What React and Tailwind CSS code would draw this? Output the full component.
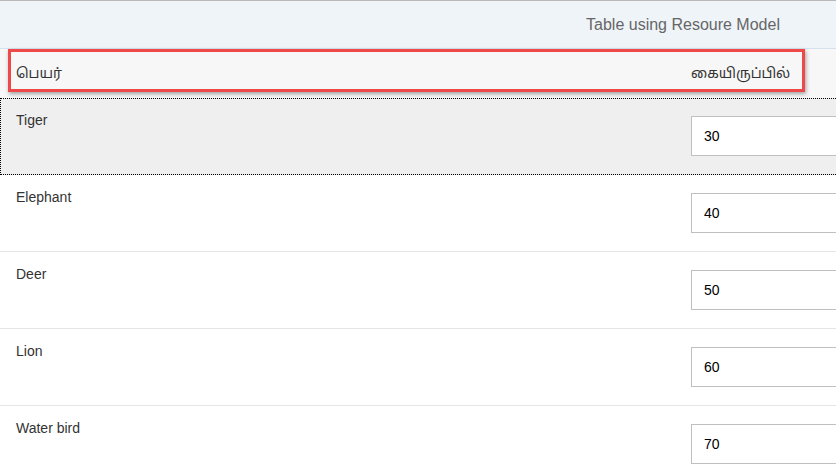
const rows = [
  { name: 'Tiger', stock: '30' },
  { name: 'Elephant', stock: '40' },
  { name: 'Deer', stock: '50' },
  { name: 'Lion', stock: '60' },
  { name: 'Water bird', stock: '70' },
]

export default function App() {
  return (
    <div className="w-[836px] h-[469px] overflow-hidden bg-white font-['Liberation_Sans','Noto_Sans_Tamil','Lohit_Tamil',Arial,sans-serif]">
      <div className="relative w-[1366px]">
        <div className="h-[49px] flex items-center justify-center border-t border-b border-t-[#b8b8b8] border-b-[#d6e1ee] bg-[#eff4f9]">
          <span className="text-[16px] text-[#666666]">Table using Resoure Model</span>
        </div>

        <div className="h-[49px] grid grid-cols-2 items-center bg-[#f7f7f7] text-[14px] text-[#333333]">
          <div className="pl-4">பெயர்</div>
          <div className="pl-2">கையிருப்பில்</div>
        </div>

        {rows.map((row, i) => (
          <div
            key={row.name}
            className={`h-[77px] grid grid-cols-2 border-b border-[#e5e5e5] ${i === 0 ? 'bg-[#efefef] outline-1 outline-dotted outline-black -outline-offset-1' : 'bg-white'}`}>
            <div className="pl-4 pt-[14px] text-[14px] leading-4 text-[#333333]">{row.name}</div>
            <div className="px-2 pt-[18px]">
              <div className="h-[40px] flex items-center px-3 border border-[#bfbfbf] bg-white text-[14px] leading-4 text-black">
                {row.stock}
              </div>
            </div>
          </div>
        ))}

        <div className="absolute left-2 top-[49px] w-[797px] h-[43px] border-[3px] border-[#ef4848] shadow-[1px_2px_4px_rgba(0,0,0,0.35)]" />
      </div>
    </div>
  )
}
